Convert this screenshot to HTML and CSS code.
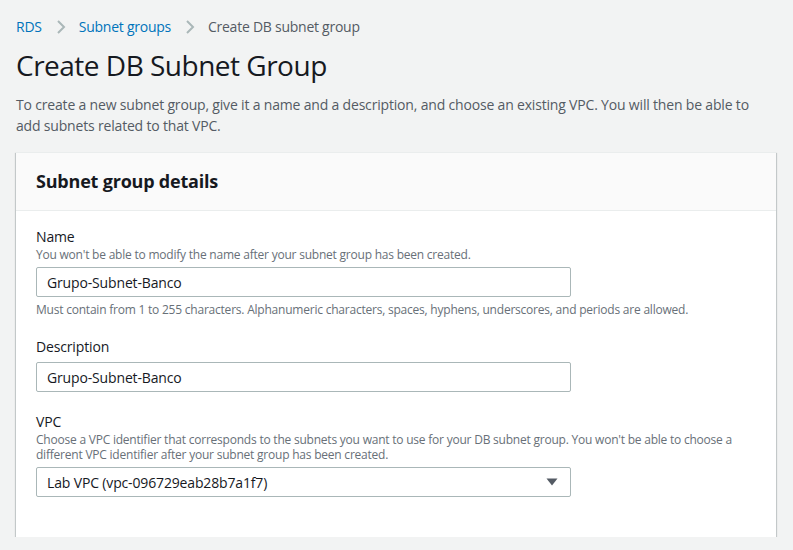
FILE: index.html
```html
<!DOCTYPE html>
<html lang="en">
<head>
<meta charset="utf-8">
<title>Create DB Subnet Group</title>
<link rel="stylesheet" href="styles.css">
</head>
<body>
<nav class="breadcrumbs">
  <a class="crumb-link" href="#">RDS</a>
  <svg class="chev" width="10" height="16" viewBox="0 0 10 16"><path d="M2 2 L8 8 L2 14" fill="none" stroke="#aab7b8" stroke-width="2"/></svg>
  <a class="crumb-link" href="#">Subnet groups</a>
  <svg class="chev" width="10" height="16" viewBox="0 0 10 16"><path d="M2 2 L8 8 L2 14" fill="none" stroke="#aab7b8" stroke-width="2"/></svg>
  <span class="crumb-current">Create DB subnet group</span>
</nav>
<h1 class="title">Create DB Subnet Group</h1>
<p class="intro">To create a new subnet group, give it a name and a description, and choose an existing VPC. You will then be able to add subnets related to that VPC.</p>

<section class="card">
  <header class="card-header"><h2>Subnet group details</h2></header>
  <div class="card-body">
    <div class="field field-name">
      <label class="label">Name</label>
      <div class="desc">You won't be able to modify the name after your subnet group has been created.</div>
      <div class="input input-after-desc">Grupo-Subnet-Banco</div>
      <div class="constraint">Must contain from 1 to 255 characters. Alphanumeric characters, spaces, hyphens, underscores, and periods are allowed.</div>
    </div>
    <div class="field">
      <label class="label">Description</label>
      <div class="input">Grupo-Subnet-Banco</div>
    </div>
    <div class="field">
      <label class="label">VPC</label>
      <div class="desc desc-multi">Choose a VPC identifier that corresponds to the subnets you want to use for your DB subnet group. You won't be able to choose a different VPC identifier after your subnet group has been created.</div>
      <div class="input select">
        <span>Lab VPC (vpc-096729eab28b7a1f7)</span>
        <svg class="caret" width="12" height="8" viewBox="0 0 12 8"><path d="M0.5 0.5 H11.5 L6 7.5 Z" fill="#545b64"/></svg>
      </div>
    </div>
  </div>
</section>
</body>
</html>
```
FILE: styles.css
```css
* { box-sizing: border-box; }
html, body { margin: 0; padding: 0; }
body {
  background: #f2f3f3;
  font-family: "Open Sans", "Noto Sans", sans-serif;
  color: #16191f;
  padding: 17px 17px 0 16px;
  font-size: 14px;
}
.breadcrumbs {
  display: flex;
  align-items: center;
  height: 20px;
  font-size: 14px;
  line-height: 20px;
  letter-spacing: -0.25px;
}
.crumb-link { color: #0073bb; text-decoration: none; }
.chev { margin: 0 13px 0 14px; flex: none; }
.crumb-current { color: #545b64; }
.title {
  margin: 10px 0 0 0;
  font-size: 28px;
  line-height: 36px;
  font-weight: 400;
  letter-spacing: -0.5px;
  color: #16191f;
}
.intro {
  margin: 11px 0 0 0;
  font-size: 14px;
  line-height: 21px;
  letter-spacing: -0.18px;
  color: #545b64;
}
.card {
  margin-top: 16px;
  background: #fff;
  border-top: 1px solid #eaeded;
  box-shadow: 0 1px 1px 0 rgba(0,28,36,.3), 1px 1px 1px 0 rgba(0,28,36,.15), -1px 1px 1px 0 rgba(0,28,36,.15);
}
.card-header {
  background: #fafafa;
  border-bottom: 1px solid #eaeded;
  padding: 17px 20px 18px;
}
.card-header h2 {
  margin: 0;
  font-size: 18px;
  line-height: 22px;
  font-weight: 700;
  letter-spacing: -0.2px;
  color: #16191f;
}
.card-body { padding: 16px 20px 20px; }
.field { margin-bottom: 20px; }
.field-name { margin-bottom: 19px; }
.label {
  display: block;
  font-size: 14px;
  line-height: 20px;
  letter-spacing: -0.15px;
  color: #16191f;
}
.desc {
  font-size: 12px;
  line-height: 16px;
  letter-spacing: -0.22px;
  color: #687078;
}
.desc-multi { line-height: 15px; }
.input {
  margin-top: 5px;
  width: 535px;
  height: 30px;
  border: 1px solid #aab7b8;
  border-radius: 2px;
  padding: 0 10px;
  display: flex;
  align-items: center;
  font-size: 14px;
  letter-spacing: -0.15px;
  color: #16191f;
  background: #fff;
}
.input-after-desc { margin-top: 4px; }
.select { justify-content: space-between; }
.caret { margin-right: 2px; flex: none; }
.constraint {
  margin-top: 5px;
  font-size: 12px;
  line-height: 16px;
  letter-spacing: -0.22px;
  color: #687078;
}
```
